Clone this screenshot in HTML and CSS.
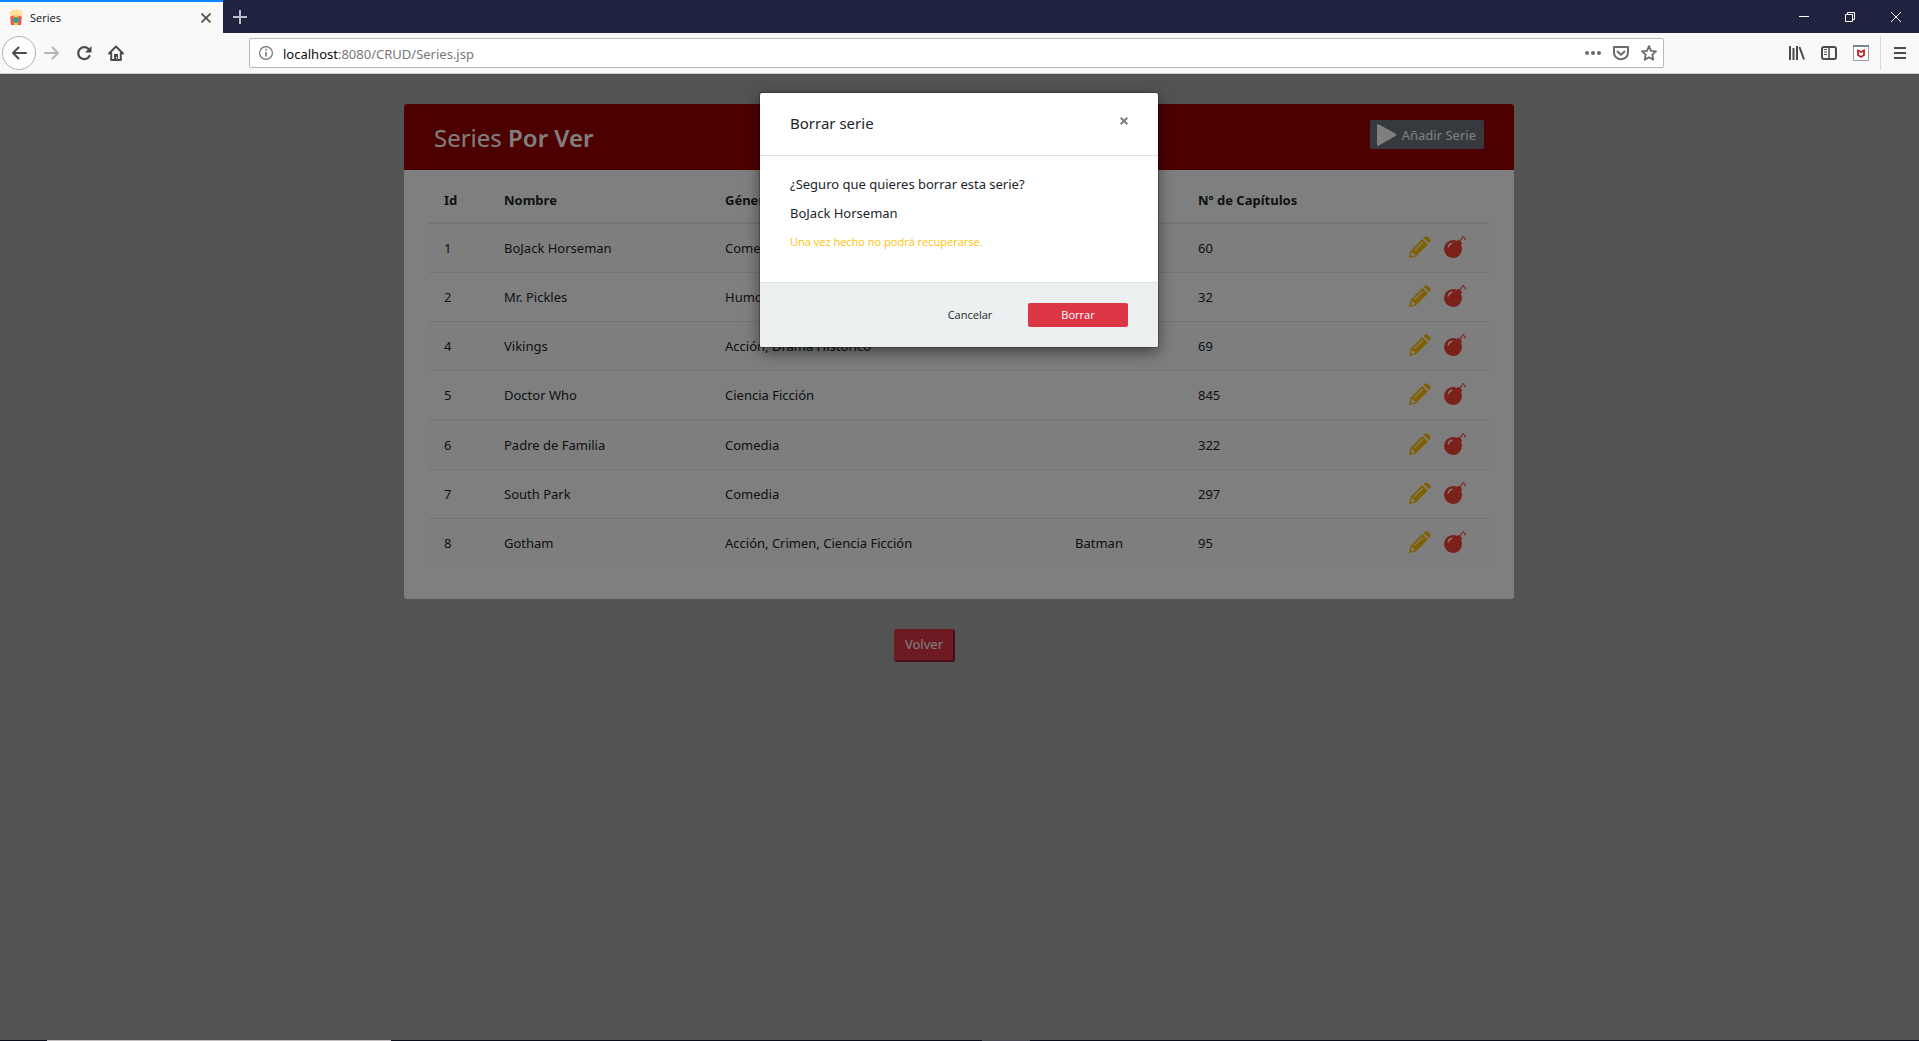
FILE: index.html
```html
<!DOCTYPE html>
<html lang="es">
<head>
<meta charset="utf-8">
<title>Series</title>
<link rel="stylesheet" href="styles.css">
</head>
<body>
<svg class="sprite" aria-hidden="true">
  <symbol id="pencil" viewBox="0 0 22 22">
    <path fill="#ffc107" fill-rule="evenodd" d="M15.2 1.2 17 .2Q18 0 19 .9L21.2 3.2Q22.300 4.500 21.200 5.800L20 7.200 14.500 1.800ZM13.200 3 18.800 8.600 6.500 20.700.3 22 0 21.700 1.400 15ZM13.300 5.800 4.800 14.200 5.700 15.100 14.200 6.700ZM2.700 16.300 2.100 19.500 3.200 20.300 5.800 19.600 5.900 17.900 4.100 17.800 4 16.100Z"/>
  </symbol>
  <symbol id="bomb" viewBox="0 0 22 22">
    <path fill="#f44336" fill-rule="evenodd" d="M9.200 4Q11.300 4 13.100 4.900L14.400 3.600 18.300 7.500 17 8.900Q18 10.800 18 13A9 9 0 1 1 9.200 4ZM3.500 11.600H4.900Q5.300 8.500 8.300 8V6.600Q4.100 7 3.500 11.600Z"/>
    <path fill="none" stroke="#f44336" stroke-width="1.500" stroke-dasharray="2 .8" d="M15.500 5.800 17.300 4Q17.300 1 19.300 1T21.200 5"/>
  </symbol>
</svg>

<header class="browser">
  <div class="tabs">
    <div class="tab">
      <svg class="favicon" width="14" height="17" viewBox="0 0 14 17"><path fill="#f4514f" d="M1 6H13L12 16H2Z"/><path fill="#ffc233" d="M4.500 6H9.500L9 16H5Z"/><circle cx="7" cy="11" r="3" fill="#2fa58e"/><path fill="#ffe0a0" d="M1 8V6Q-1 3 2 2 4-.5 6 1 8-1 10 1 14 1 13 4 14.500 6 13 8L10 6.500H4Z"/></svg>
      <span class="tab-title">Series</span>
      <button class="bare" aria-label="Cerrar pestaña"><svg width="10" height="10" viewBox="0 0 10 10"><path d="M.5.5 9.500 9.500M9.500.5.5 9.500" stroke="#4b4b4f" stroke-width="1.600"/></svg></button>
    </div>
    <button class="bare new-tab" aria-label="Nueva pestaña"><svg width="14" height="14" viewBox="0 0 14 14"><path d="M7 0V14M0 7H14" stroke="#bcbcca" stroke-width="2"/></svg></button>
    <div class="window-controls">
      <button class="bare" aria-label="Minimizar"><svg width="10" height="10" viewBox="0 0 10 10"><path d="M0 4.500H10" stroke="#fff"/></svg></button>
      <button class="bare" aria-label="Restaurar"><svg width="10" height="10" viewBox="0 0 10 10"><path d="M.5 2.500H7.500V9.500H.5ZM2.500 2.500V.5H9.500V7.500H7.500" fill="none" stroke="#fff"/></svg></button>
      <button class="bare" aria-label="Cerrar"><svg width="10" height="10" viewBox="0 0 10 10"><path d="M0 0 10 10M10 0 0 10" stroke="#fff"/></svg></button>
    </div>
  </div>
  <div class="toolbar">
    <div class="nav">
      <button class="bare back" aria-label="Atrás"><svg width="16" height="16" viewBox="0 0 16 16"><path d="M15 8H2M7.500 2.500 2 8 7.500 13.500" fill="none" stroke="#4b4b4f" stroke-width="2" stroke-linecap="round" stroke-linejoin="round"/></svg></button>
      <button class="bare" aria-label="Adelante"><svg width="16" height="16" viewBox="0 0 16 16"><path d="M1 8H14M8.500 2.500 14 8 8.500 13.500" fill="none" stroke="#b6b6b8" stroke-width="2" stroke-linecap="round" stroke-linejoin="round"/></svg></button>
      <button class="bare" aria-label="Recargar"><svg width="16" height="16" viewBox="0 0 16 16"><path d="M13 4.500A6 6 0 1 0 13.500 11" fill="none" stroke="#4b4b4f" stroke-width="2.200" stroke-linecap="round"/><path d="M15.500 1V7.500H9Z" fill="#4b4b4f"/></svg></button>
      <button class="bare" aria-label="Inicio"><svg width="16" height="16" viewBox="0 0 16 16"><path d="M1 8.500 8 1.500 15 8.500M3.200 8V15H12.800V8" fill="none" stroke="#4b4b4f" stroke-width="2" stroke-linecap="round" stroke-linejoin="round"/><path d="M6 9H10V15H6ZM8 12V13.500H9V12Z" fill="#4b4b4f" fill-rule="evenodd"/></svg></button>
    </div>
    <div class="address">
      <svg width="14" height="14" viewBox="0 0 14 14"><circle cx="7" cy="7" r="6.400" fill="none" stroke="#737377" stroke-width="1.200"/><path d="M7 6V10.500M7 3V4.600" stroke="#737377" stroke-width="1.600"/></svg>
      <span class="url"><span class="host">localhost</span>:8080/CRUD/Series.jsp</span>
      <button class="bare" aria-label="Acciones"><svg width="16" height="16" viewBox="0 0 16 16"><g fill="#6b6b6f"><circle cx="2" cy="8" r="2"/><circle cx="8" cy="8" r="2"/><circle cx="14" cy="8" r="2"/></g></svg></button>
      <button class="bare" aria-label="Pocket"><svg width="16" height="16" viewBox="0 0 16 16"><path d="M1 2H15V7.500A7 6.800 0 0 1 1 7.500ZM4.500 6.500 8 9.700 11.500 6.500" fill="none" stroke="#6b6b6f" stroke-width="2" stroke-linecap="round" stroke-linejoin="round"/></svg></button>
      <button class="bare" aria-label="Favorito"><svg width="16" height="16" viewBox="0 0 16 16"><path d="M8 1.200 10 5.800 15 6.300 11.300 9.700 12.300 14.700 8 12.200 3.700 14.700 4.700 9.700 1 6.300 6 5.800Z" fill="none" stroke="#6b6b6f" stroke-width="1.800" stroke-linejoin="round"/></svg></button>
    </div>
    <div class="tools">
      <button class="bare" aria-label="Biblioteca"><svg width="16" height="16" viewBox="0 0 16 16"><path d="M1 1V15M4.500 3V15M8 1V15M10.500 2 15 14.500" stroke="#4b4b4f" stroke-width="2"/></svg></button>
      <button class="bare" aria-label="Barra lateral"><svg width="16" height="16" viewBox="0 0 16 16"><rect x="1" y="2" width="14" height="12" rx="2" fill="none" stroke="#4b4b4f" stroke-width="2"/><path d="M8 2V14" stroke="#4b4b4f" stroke-width="1.500"/><path d="M3 4.500H6M3 7H6M3 9.500H6" stroke="#4b4b4f"/></svg></button>
      <button class="bare" aria-label="Antivirus"><svg width="16" height="16" viewBox="0 0 16 16"><path d="M.5.5H15.500V15.500H.5Z" fill="#fff" stroke="#9a9a9e"/><path d="M0 0H16V2H0Z" fill="#6d8a9c"/><path d="M5 5.500 8 7 11 5.500V10L8 12 5 10Z" fill="none" stroke="#c8202a" stroke-width="1.800"/></svg></button>
    </div>
    <button class="bare menu" aria-label="Menú"><svg width="12" height="12" viewBox="0 0 12 12"><path d="M0 1H12M0 6H12M0 11H12" stroke="#4b4b4f" stroke-width="2" /></svg></button>
  </div>
</header>

<div class="page">
  <main class="container">
    <section class="card">
      <div class="card-title">
        <h2>Series <b>Por Ver</b></h2>
        <button class="add"><svg width="20" height="22" viewBox="0 0 20 22"><path fill="#fff" d="M0 1.500Q0-.5 2 .5L18.500 9.500Q20 10.800 18.500 12L2 21.500Q0 22.500 0 20.500Z"/></svg>Añadir Serie</button>
      </div>
      <table class="series">
        <colgroup><col class="c-id"><col class="c-name"><col class="c-genre"><col class="c-saga"><col class="c-count"><col class="c-actions"></colgroup>
        <thead><tr><th>Id</th><th>Nombre</th><th>Género</th><th></th><th>Nº de Capítulos</th><th></th></tr></thead>
        <tbody>
          <tr class="hovered"><td>1</td><td>BoJack Horseman</td><td>Comedia</td><td></td><td>60</td><td><div class="actions"><a href="#" aria-label="Editar"><svg width="22" height="22"><use href="#pencil"/></svg></a><a href="#" aria-label="Borrar"><svg width="22" height="22"><use href="#bomb"/></svg></a></div></td></tr>
          <tr><td>2</td><td>Mr. Pickles</td><td>Humor</td><td></td><td>32</td><td><div class="actions"><a href="#" aria-label="Editar"><svg width="22" height="22"><use href="#pencil"/></svg></a><a href="#" aria-label="Borrar"><svg width="22" height="22"><use href="#bomb"/></svg></a></div></td></tr>
          <tr><td>4</td><td>Vikings</td><td>Acción, Drama Histórico</td><td></td><td>69</td><td><div class="actions"><a href="#" aria-label="Editar"><svg width="22" height="22"><use href="#pencil"/></svg></a><a href="#" aria-label="Borrar"><svg width="22" height="22"><use href="#bomb"/></svg></a></div></td></tr>
          <tr><td>5</td><td>Doctor Who</td><td>Ciencia Ficción</td><td></td><td>845</td><td><div class="actions"><a href="#" aria-label="Editar"><svg width="22" height="22"><use href="#pencil"/></svg></a><a href="#" aria-label="Borrar"><svg width="22" height="22"><use href="#bomb"/></svg></a></div></td></tr>
          <tr><td>6</td><td>Padre de Familia</td><td>Comedia</td><td></td><td>322</td><td><div class="actions"><a href="#" aria-label="Editar"><svg width="22" height="22"><use href="#pencil"/></svg></a><a href="#" aria-label="Borrar"><svg width="22" height="22"><use href="#bomb"/></svg></a></div></td></tr>
          <tr><td>7</td><td>South Park</td><td>Comedia</td><td></td><td>297</td><td><div class="actions"><a href="#" aria-label="Editar"><svg width="22" height="22"><use href="#pencil"/></svg></a><a href="#" aria-label="Borrar"><svg width="22" height="22"><use href="#bomb"/></svg></a></div></td></tr>
          <tr><td>8</td><td>Gotham</td><td>Acción, Crimen, Ciencia Ficción</td><td>Batman</td><td>95</td><td><div class="actions"><a href="#" aria-label="Editar"><svg width="22" height="22"><use href="#pencil"/></svg></a><a href="#" aria-label="Borrar"><svg width="22" height="22"><use href="#bomb"/></svg></a></div></td></tr>
        </tbody>
      </table>
    </section>
    <div class="back-row"><button class="volver">Volver</button></div>
  </main>

  <div class="overlay">
    <form class="modal" role="dialog" aria-labelledby="modal-title">
      <div class="modal-header">
        <h4 id="modal-title">Borrar serie</h4>
        <button type="button" class="bare close" aria-label="Cerrar"><svg width="8" height="8" viewBox="0 0 8 8"><path d="M.7.7 7.300 7.300M7.300.7.7 7.300" stroke="#7f7f7f" stroke-width="2"/></svg></button>
      </div>
      <div class="modal-body">
        <p>¿Seguro que quieres borrar esta serie?</p>
        <p>BoJack Horseman</p>
        <p class="warning">Una vez hecho no podrá recuperarse.</p>
      </div>
      <div class="modal-footer">
        <button type="button" class="btn">Cancelar</button>
        <button type="button" class="btn danger">Borrar</button>
      </div>
    </form>
  </div>
</div>

<footer class="taskbar"><span class="task-search"></span><span class="task-active"></span></footer>
</body>
</html>
```

FILE: styles.css
```css
* { box-sizing: border-box; }
body {
  margin: 0;
  min-height: 100vh;
  display: flex;
  flex-direction: column;
  font: 13px/20px "Noto Sans", sans-serif;
  color: #212529;
}
button { font: inherit; color: inherit; cursor: pointer; }
svg { display: block; flex: none; }
.sprite { position: absolute; width: 0; height: 0; }
.bare { border: 0; background: none; padding: 0; display: flex; align-items: center; justify-content: center; }

/* Browser window */
.browser { background: #f9f9fa; border-bottom: 1px solid #cfcfd1; }
.tabs { display: flex; height: 33px; background: #202340; }
.tab {
  width: 223px;
  display: flex;
  align-items: center;
  padding: 0 12px 0 9px;
  border-top: 2px solid #0a84ff;
  background: #f9f9fa;
  color: #0c0c0d;
}
.tab-title { flex: 1; margin-left: 7px; font: 11px/16px "Open Sans", sans-serif; }
.new-tab { width: 34px; }
.window-controls { display: flex; margin-left: auto; }
.window-controls .bare { width: 46px; }
.toolbar { display: flex; align-items: center; height: 40px; }
.nav { display: flex; align-items: center; gap: 16px; padding-left: 2px; width: 249px; }
.back { width: 34px; height: 34px; margin-right: -8px; border: 1px solid #b1b1b3; border-radius: 50%; background: #fff; }
.address {
  flex: 1;
  display: flex;
  align-items: center;
  gap: 12px;
  height: 30px;
  padding: 0 6px 0 9px;
  border: 1px solid #b9b9bb;
  border-radius: 2px;
  background: #fff;
}
.url { flex: 1; font: 13px/20px "Noto Sans", sans-serif; color: #77777a; margin-left: -2px; padding-top: 2px; }
.host { color: #0c0c0d; }
.tools { display: flex; gap: 16px; width: 216px; justify-content: flex-end; padding-right: 11px; }
.menu { width: 39px; height: 34px; border-left: 1px solid #d7d7db; }

/* Page */
.page { position: relative; flex: 1; padding-right: 1px; background: #a6a6a6; }
.container { max-width: 1110px; margin: 0 auto; padding-top: 30px; }
.card { background: #fff; border-radius: 3px; padding: 0 25px 31px; }
.card-title {
  display: flex;
  justify-content: space-between;
  align-items: flex-start;
  height: 66px;
  margin: 0 -25px 8px;
  padding: 16px 30px;
  border-radius: 3px 3px 0 0;
  background: #9b0000;
  color: #fff;
}
.card-title h2 { margin: 3px 0 0; font-size: 24px; line-height: 30px; font-weight: 400; }
.card-title b { font-weight: 600; }
.add {
  display: flex;
  align-items: center;
  gap: 5px;
  height: 29px;
  padding: 0 8px 0 7px;
  border: 0;
  border-radius: 2px;
  background: #6c757d;
  color: #fff;
}
.series { width: 100%; table-layout: fixed; border-collapse: collapse; }
.c-id { width: 60px; }
.c-name { width: 221px; }
.c-genre { width: 350px; }
.c-saga { width: 123px; }
.c-actions { width: 95px; }
.series th, .series td { padding: 12px 15px; text-align: left; border-top: 1px solid #e9e9e9; height: 49px; }
.series thead th { height: 44px; border-top: 0; border-bottom: 2px solid #e9e9e9; font-weight: 700; }
.series tbody tr:nth-child(5) td { height: 50px; }
.series tbody tr:nth-child(odd) { background: #fcfcfc; }
.series tbody .hovered { background: #f5f5f5; }
.actions { display: flex; gap: 13px; padding-bottom: 2px; }
.back-row { display: flex; justify-content: center; padding: 30px 70px 30px 0; }
.volver {
  width: 61px;
  height: 33px;
  padding: 0 0 2px;
  border: 2px outset #dc3545;
  border-radius: 3px;
  background: #dc3545;
  color: #fff;
}

/* Confirmation dialog */
.overlay { position: absolute; inset: 0; padding: 19px 1px 0 0; background: rgba(0, 0, 0, .5); }
.modal {
  max-width: 398px;
  margin: 0 auto;
  border-radius: 2px;
  background: #fff;
  box-shadow: 0 5px 15px rgba(0, 0, 0, .5), 0 0 0 1px rgba(0, 0, 0, .2);
}
.modal-header { display: flex; justify-content: space-between; padding: 20px 30px; height: 63px; border-bottom: 1px solid #dee2e6; }
.modal-header h4 { margin: 0; font-size: 15px; line-height: 20px; font-weight: 400; }
.close { width: 8px; height: 16px; }
.modal-body { padding: 13px 30px 21px; }
.modal-body p { margin: 5px 0 9px; }
.modal-body .warning { font: 11px/20px "Open Sans", sans-serif; color: #ffc107; }
.modal-footer {
  display: flex;
  justify-content: flex-end;
  gap: 8px;
  padding: 20px 30px;
  border-top: 1px solid #dee2e6;
  border-radius: 0 0 2px 2px;
  background: #ecf0f1;
}
.btn { width: 100px; height: 24px; padding: 0; border: 0; border-radius: 2px; background: none; font: 11px/20px "Open Sans", sans-serif; }
.danger { background: #dc3545; color: #fff; }

/* Visible edge of the system taskbar */
.taskbar { display: flex; height: 1px; background: #0a0d1a; }
.task-search { width: 344px; margin-left: 47px; background: #c4bfbf; }
.task-active { width: 48px; margin-left: 591px; background: #46474f; }
```
